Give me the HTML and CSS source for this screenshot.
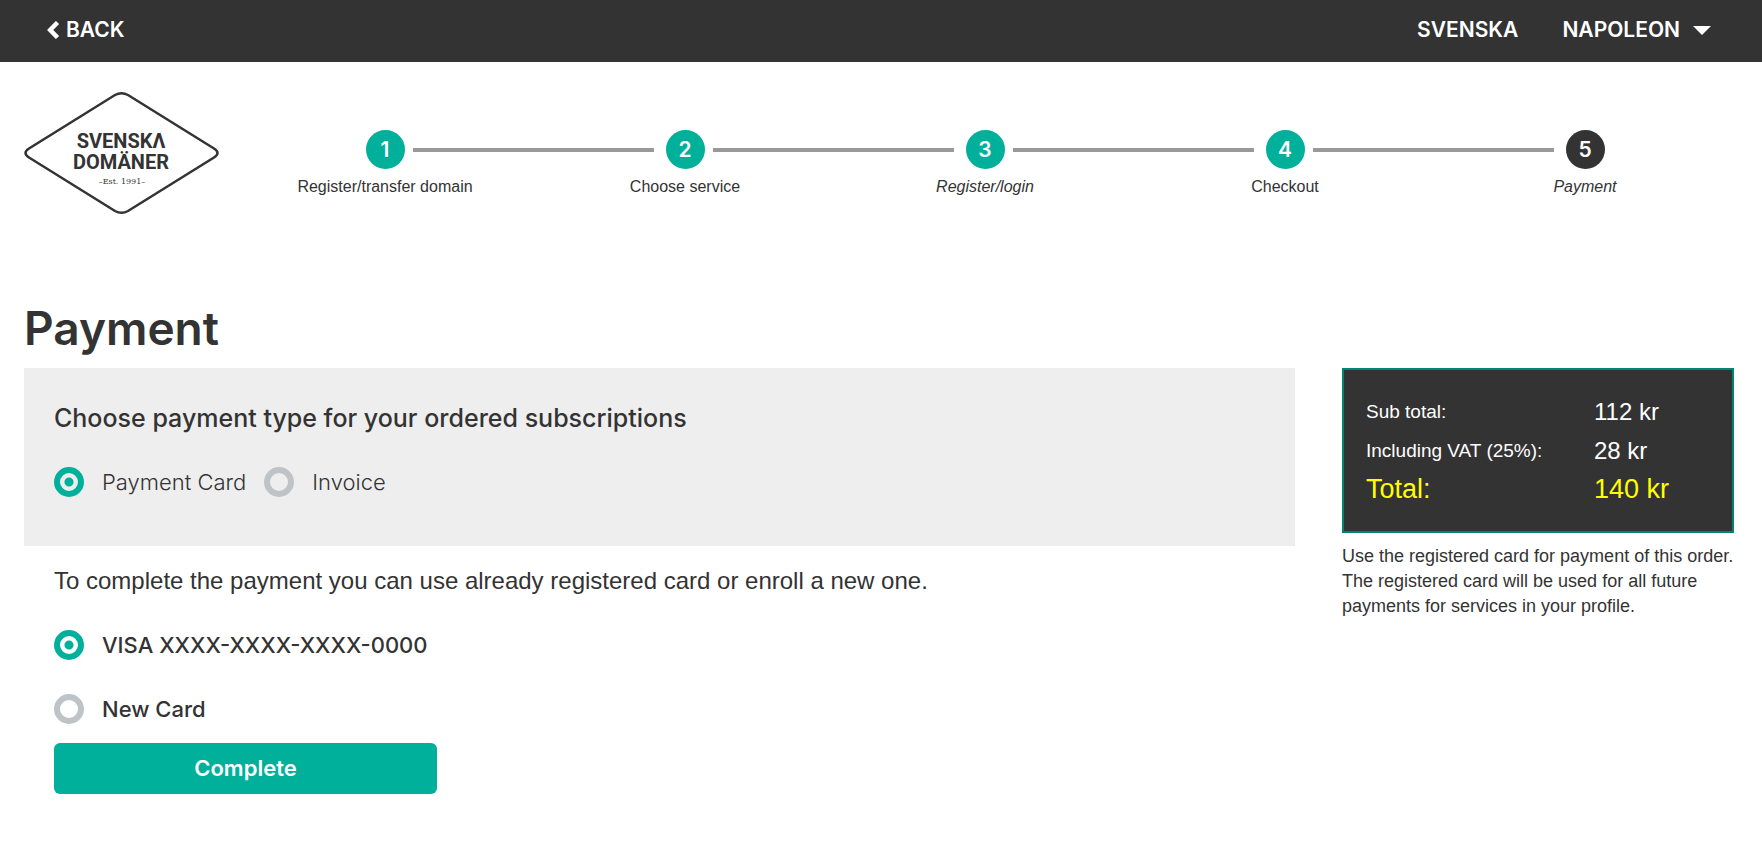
FILE: index.html
```html
<!DOCTYPE html>
<html lang="en">
<head>
<meta charset="utf-8">
<title>Payment</title>
<link rel="stylesheet" href="styles.css">
</head>
<body>
<header class="topbar">
  <a class="topbar-link" href="#">
    <svg class="chevron" viewBox="0 0 13 18" aria-hidden="true"><path d="M10.500 1.500 3.200 9l7.300 7.500" fill="none" stroke="#fff" stroke-width="4.500"/></svg>
    BACK
  </a>
  <nav class="topbar-nav">
    <a class="topbar-link" href="#">SVENSKA</a>
    <button class="topbar-link user" type="button">NAPOLEON
      <svg class="caret" viewBox="0 0 18 9" aria-hidden="true"><path d="M0 0h18L9 9z" fill="#fff"/></svg>
    </button>
  </nav>
</header>

<div class="intro">
  <a class="logo" href="#" aria-label="Svenska Domäner">
    <svg viewBox="0 0 195 122">
      <path d="M91 3Q97.500-.500 104 3L190 56.500Q197 61 190 65.500L104 119Q97.500 122.500 91 119L5 65.500Q-2 61 5 56.500Z" fill="none" stroke="#333" stroke-width="2.500"/>
      <text class="logo-name" x="97" y="56" text-anchor="middle">SVENSKΛ</text>
      <text class="logo-name" x="97" y="77" text-anchor="middle">DOMÄNER</text>
      <text class="logo-est" x="98" y="92" text-anchor="middle">–Est. 1991–</text>
    </svg>
  </a>
  <ol class="steps">
    <li class="step"><span class="dot">1</span><span class="step-label">Register/transfer domain</span></li>
    <li class="step"><span class="dot">2</span><span class="step-label">Choose service</span></li>
    <li class="step"><span class="dot">3</span><em class="step-label">Register/login</em></li>
    <li class="step"><span class="dot">4</span><span class="step-label">Checkout</span></li>
    <li class="step current"><span class="dot">5</span><em class="step-label">Payment</em></li>
  </ol>
</div>

<main class="content">
  <h1 class="title">Payment</h1>
  <div class="columns">
    <form class="payment">
      <section class="type-panel">
        <h2 class="panel-title">Choose payment type for your ordered subscriptions</h2>
        <div class="type-options">
          <label class="option light"><input class="radio" type="radio" name="type" checked>Payment Card</label>
          <label class="option light"><input class="radio" type="radio" name="type">Invoice</label>
        </div>
      </section>
      <section class="cards">
        <p class="lead">To complete the payment you can use already registered card or enroll a new one.</p>
        <label class="option"><input class="radio" type="radio" name="card" checked>VISA XXXX-XXXX-XXXX-0000</label>
        <label class="option"><input class="radio" type="radio" name="card">New Card</label>
        <button class="complete" type="button">Complete</button>
      </section>
    </form>
    <aside class="summary">
      <dl class="totals">
        <dt>Sub total:</dt><dd>112 kr</dd>
        <dt>Including VAT (25%):</dt><dd>28 kr</dd>
        <dt class="grand">Total:</dt><dd class="grand">140 kr</dd>
      </dl>
      <p class="note">Use the registered card for payment of this order. The registered card will be used for all future payments for services in your profile.</p>
    </aside>
  </div>
</main>
</body>
</html>
```
FILE: styles.css
```css
* { box-sizing: border-box; }

body {
  margin: 0;
  background: #fff;
  color: #333;
  font-family: "Liberation Sans", Arial, sans-serif;
}

h1, h2, p, ol, dl, dd { margin: 0; padding: 0; }

.topbar {
  display: flex;
  justify-content: space-between;
  align-items: center;
  height: 62px;
  padding: 0 51px 2px 47px;
  background: #333;
}
.topbar-link {
  display: flex;
  align-items: center;
  gap: 6px;
  padding: 0;
  border: 0;
  background: none;
  color: #fff;
  font: 600 21px/24px Inter, sans-serif;
  text-decoration: none;
}
.topbar-nav { display: flex; gap: 44px; }
.user { gap: 13px; }
.chevron { width: 13px; height: 18px; }
.caret { width: 18px; height: 9px; }

.intro {
  display: flex;
  align-items: flex-start;
  gap: 16px;
  padding: 30px 27px 0 24px;
}
.logo { flex: none; width: 195px; }
.logo svg { display: block; width: 100%; overflow: visible; }
.logo-name { font: 700 20px Roboto, sans-serif; fill: #333; }
.logo-est { font: 8px "DejaVu Serif", serif; fill: #333; }

.steps {
  display: flex;
  flex: 1;
  padding-top: 38px;
  list-style: none;
}
.step {
  position: relative;
  display: flex;
  flex: 1;
  flex-direction: column;
  align-items: center;
  gap: 8px;
}
.step:not(:last-child)::after {
  content: "";
  position: absolute;
  top: 18px;
  left: calc(50% + 28px);
  width: calc(100% - 59px);
  height: 4px;
  background: #999;
}
.dot {
  width: 39px;
  height: 39px;
  border-radius: 50%;
  background: #00b09b;
  color: #fff;
  font: 600 21px/39px Inter, sans-serif;
  text-align: center;
}
.current .dot { background: #333; }
.step-label { font-size: 16px; line-height: 20px; }

.content { padding: 86px 28px 24px 24px; }
.title { font: 600 46px/56px Inter, sans-serif; }
.columns {
  display: flex;
  align-items: flex-start;
  gap: 47px;
  padding-top: 12px;
}
.payment { flex: 1; }
.type-panel {
  padding: 32px 30px 49px;
  background: #eee;
}
.panel-title { font: 500 25px/36px Inter, sans-serif; }
.type-options {
  display: flex;
  gap: 18px;
  padding-top: 31px;
}
.option {
  display: flex;
  align-items: center;
  gap: 18px;
  font: 500 22px/30px Inter, sans-serif;
}
.light { font-weight: 300; }
.radio {
  flex: none;
  appearance: none;
  width: 30px;
  height: 30px;
  margin: 0;
  border: 6px solid #bdc3c7;
  border-radius: 50%;
}
.radio:checked {
  border-color: #00b09b;
  background: radial-gradient(circle, #00b09b 4px, transparent 5px);
}
.cards {
  display: flex;
  flex-direction: column;
  align-items: flex-start;
  gap: 34px;
  padding: 20px 30px 0;
}
.lead { font-size: 24px; line-height: 30px; }
.complete {
  width: 383px;
  height: 51px;
  margin-top: -15px;
  padding: 0 0 1px;
  border: 0;
  border-radius: 6px;
  background: #00b09b;
  color: #fff;
  font: 600 22px/30px Inter, sans-serif;
}

.summary { flex: 0 0 392px; }
.totals {
  display: grid;
  grid-template-columns: 228px 1fr;
  align-items: center;
  padding: 22px 22px 23px;
  border: 2px solid #008573;
  background: #333;
  color: #fff;
}
.totals dt, .totals dd { line-height: 39px; }
.totals dt { font-size: 19px; }
.totals dd { font-size: 24px; }
.totals .grand { color: #ff0; font-size: 27px; line-height: 38px; }
.note {
  padding-top: 11px;
  font-size: 18px;
  line-height: 25px;
}
```
